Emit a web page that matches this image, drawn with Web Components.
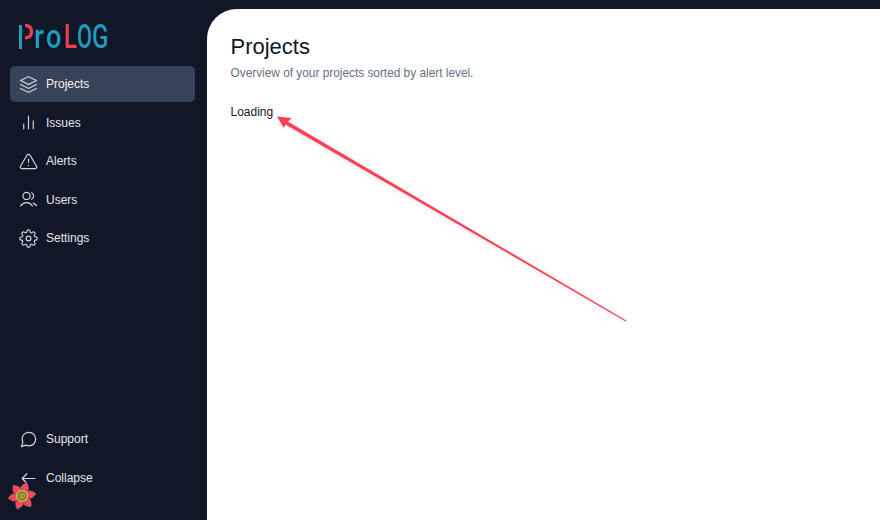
<!DOCTYPE html>
<html lang="en">
<head>
<meta charset="utf-8">
<title>ProLOG</title>
<style>
  html, body { margin: 0; height: 100%; }
  body { background: #101828; font-family: "Liberation Sans", Arial, sans-serif; overflow: hidden; }
</style>
</head>
<body>
<app-shell>
  <side-nav slot="nav">
    <pro-logo slot="logo"></pro-logo>
    <nav-item icon="layers" active>Projects</nav-item>
    <nav-item icon="bars">Issues</nav-item>
    <nav-item icon="alert">Alerts</nav-item>
    <nav-item icon="users">Users</nav-item>
    <nav-item icon="settings">Settings</nav-item>
    <nav-item slot="bottom" icon="support">Support</nav-item>
    <nav-item slot="bottom" icon="back">Collapse</nav-item>
  </side-nav>
  <page-header title="Projects" subtitle="Overview of your projects sorted by alert level."></page-header>
  <div style="font-size:12px;line-height:18px;color:#101828">Loading</div>
</app-shell>
<flower-badge></flower-badge>
<red-arrow></red-arrow>

<script>
const ICONS = {
  layers: `<path d="M2 12l9.64 4.82c.13.07.2.1.27.11a.6.6 0 0 0 .18 0c.07-.01.14-.04.27-.11L22 12M2 17l9.64 4.82c.13.07.2.1.27.11a.6.6 0 0 0 .18 0c.07-.01.14-.04.27-.11L22 17M2 7l9.64-4.82c.13-.07.2-.1.27-.11a.6.6 0 0 1 .18 0c.07.01.14.04.27.11L22 7l-9.64 4.82c-.13.07-.2.1-.27.11a.6.6 0 0 1-.18 0c-.07-.01-.14-.04-.27-.11L2 7Z"/>`,
  bars: `<path d="M18 20V10M12 20V4M6 20v-6"/>`,
  alert: `<path d="M10.29 3.86L1.82 18a2 2 0 0 0 1.71 3h16.94a2 2 0 0 0 1.71-3L13.71 3.86a2 2 0 0 0-3.42 0z"/><path d="M12 9v4M12 17h.01"/>`,
  users: `<path d="M16 3.47a4.5 4.5 0 0 1 0 8.06M18 16.62c1.51.68 2.87 1.8 4 3.24M2 20c1.95-2.48 4.59-4 7.5-4s5.55 1.52 7.5 4M14 7.5a4.5 4.5 0 1 1-9 0 4.5 4.5 0 0 1 9 0Z"/>`,
  settings: `<circle cx="12" cy="12" r="3"/><path d="M19.4 15a1.65 1.65 0 0 0 .33 1.82l.06.06a2 2 0 0 1 0 2.83 2 2 0 0 1-2.83 0l-.06-.06a1.65 1.65 0 0 0-1.82-.33 1.65 1.65 0 0 0-1 1.51V21a2 2 0 0 1-2 2 2 2 0 0 1-2-2v-.09A1.65 1.65 0 0 0 9 19.4a1.65 1.65 0 0 0-1.82.33l-.06.06a2 2 0 0 1-2.83 0 2 2 0 0 1 0-2.83l.06-.06a1.65 1.65 0 0 0 .33-1.82 1.65 1.65 0 0 0-1.51-1H3a2 2 0 0 1-2-2 2 2 0 0 1 2-2h.09A1.65 1.65 0 0 0 4.6 9a1.65 1.65 0 0 0-.33-1.82l-.06-.06a2 2 0 0 1 0-2.83 2 2 0 0 1 2.83 0l.06.06a1.65 1.65 0 0 0 1.82.33H9a1.65 1.65 0 0 0 1-1.51V3a2 2 0 0 1 2-2 2 2 0 0 1 2 2v.09a1.65 1.65 0 0 0 1 1.51 1.65 1.65 0 0 0 1.82-.33l.06-.06a2 2 0 0 1 2.83 0 2 2 0 0 1 0 2.83l-.06.06a1.65 1.65 0 0 0-.33 1.82V9a1.65 1.65 0 0 0 1.51 1H21a2 2 0 0 1 2 2 2 2 0 0 1-2 2h-.09a1.65 1.65 0 0 0-1.51 1z"/>`,
  support: `<path d="M21 11.5a8.38 8.38 0 0 1-.9 3.8 8.5 8.5 0 0 1-7.6 4.7 8.38 8.38 0 0 1-3.8-.9L3 21l1.9-5.7a8.38 8.38 0 0 1-.9-3.8 8.5 8.5 0 0 1 4.7-7.6 8.38 8.38 0 0 1 3.8-.9h.5a8.48 8.48 0 0 1 8 8v.5z"/>`,
  back: `<path d="M20 12H4M10 6l-6 6 6 6"/>`
};

class AppShell extends HTMLElement {
  constructor() {
    super();
    this.attachShadow({ mode: "open" }).innerHTML = `
      <style>
        :host { display: flex; height: 520px; }
        main {
          flex: 1;
          margin-top: 9px;
          padding: 24px 24px 0 23.5px;
          background: #fff;
          border-radius: 30px 0 0 0;
        }
      </style>
      <slot name="nav"></slot>
      <main><slot></slot></main>`;
  }
}

class SideNav extends HTMLElement {
  constructor() {
    super();
    this.attachShadow({ mode: "open" }).innerHTML = `
      <style>
        :host {
          display: flex;
          flex-direction: column;
          box-sizing: border-box;
          width: 207px;
          height: 520px;
          padding: 22px 12px 24px 10px;
        }
        .top { display: flex; flex-direction: column; gap: 2.6px; margin-top: 14px; }
        .bottom { display: flex; flex-direction: column; gap: 2.6px; margin-top: auto; }
      </style>
      <slot name="logo"></slot>
      <div class="top"><slot></slot></div>
      <div class="bottom"><slot name="bottom"></slot></div>`;
  }
}

class NavItem extends HTMLElement {
  constructor() {
    super();
    const icon = ICONS[this.getAttribute("icon")] || "";
    this.attachShadow({ mode: "open" }).innerHTML = `
      <style>
        :host {
          display: flex;
          align-items: center;
          gap: 8px;
          height: 36px;
          padding-left: 9px;
          border-radius: 5px;
          color: #e4e7ec;
          font-size: 12px;
        }
        :host([active]) { background: #374357; color: #f2f4f7; }
        svg { width: 19px; height: 19px; fill: none; stroke: #d0d5dd; stroke-width: 1.5; stroke-linecap: round; stroke-linejoin: round; }
      </style>
      <svg viewBox="0 0 24 24">${icon}</svg>
      <slot></slot>`;
  }
}

// wordmark kept as real text, every letter squeezed to its slot in the logo
class ProLogo extends HTMLElement {
  constructor() {
    super();
    const letters = [
      ["P", 17, 0.81, "#ef3f51"],
      ["r", 11.5, 0.85, "#1f9cc0"],
      ["o", 15.5, 0.82, "#1f9cc0"],
      ["L", 2.5, 0, ""],
      ["L", 13, 0.73, "#ef3f51"],
      ["O", 15, 0.66, "#1f9cc0"],
      ["G", 16.5, 0.73, "#1f9cc0"]
    ];
    const marks = letters.map(([c, w, scale, color]) => scale
      ? `<span style="width:${w}px"><b style="color:${color};transform:scaleX(${scale})">${c}</b></span>`
      : `<span style="width:${w}px"></span>`).join("");
    this.attachShadow({ mode: "open" }).innerHTML = `
      <style>
        :host { display: flex; position: relative; height: 30px; padding-left: 7px; font: 500 33px/30px Roboto, sans-serif; }
        span { display: block; flex: none; }
        b { display: block; font-weight: 500; width: max-content; transform-origin: 0 0; }
        .mask { position: absolute; left: 8px; top: 0; width: 7px; height: 30px; background: #101828; }
        .stem { position: absolute; left: 9px; top: 3px; width: 2.8px; height: 24px; background: #1f9cc0; }
      </style>
      ${marks}
      <div class="mask"></div>
      <div class="stem"></div>`;
  }
}

class PageHeader extends HTMLElement {
  constructor() {
    super();
    this.attachShadow({ mode: "open" }).innerHTML = `
      <style>
        :host { display: block; margin-bottom: 21px; }
        h1 { margin: 0 0 3px; font-size: 22px; line-height: 28px; font-weight: 400; color: #101828; }
        p { margin: 0; font-size: 11.85px; line-height: 18px; color: #667085; }
      </style>
      <h1>${this.getAttribute("title")}</h1>
      <p>${this.getAttribute("subtitle")}</p>`;
  }
}

class FlowerBadge extends HTMLElement {
  constructor() {
    super();
    let petals = "";
    for (let i = 0; i < 6; i++) {
      petals += `<path transform="rotate(${i * 60 + 20} 15 15)" d="M15 15C9 11 9.500 5 15 .5 20.500 5 21 11 15 15Z"/>`;
    }
    this.attachShadow({ mode: "open" }).innerHTML = `
      <style>
        :host { display: block; position: absolute; left: 7px; top: 481px; width: 30px; height: 30px; }
        svg { display: block; width: 30px; height: 30px; }
      </style>
      <svg viewBox="0 0 30 30">
        <g fill="#f24a5c" stroke="#0f3050" stroke-width=".5">${petals}</g>
        <circle cx="15" cy="15" r="6.200" fill="#c9a93a"/>
        <circle cx="15" cy="15" r="3.800" fill="none" stroke="#4b5a45" stroke-width="1"/>
        <circle cx="15" cy="15" r="1.500" fill="#e3c74a" stroke="#3c4a44" stroke-width=".7"/>
      </svg>`;
  }
}

class RedArrow extends HTMLElement {
  constructor() {
    super();
    this.attachShadow({ mode: "open" }).innerHTML = `
      <style>
        :host { display: block; position: absolute; left: 0; top: 0; width: 880px; height: 520px; pointer-events: none; }
        svg { display: block; width: 880px; height: 520px; filter: drop-shadow(0 1px 2px rgba(0,0,0,.12)); }
      </style>
      <svg viewBox="0 0 880 520">
        <polygon fill="#fa4054" points="277,116.500 291.500,118 288,121.700 626.300,320.500 625.700,321.500 285.800,124.800 283.500,127.500"/>
      </svg>`;
  }
}

customElements.define("app-shell", AppShell);
customElements.define("side-nav", SideNav);
customElements.define("nav-item", NavItem);
customElements.define("pro-logo", ProLogo);
customElements.define("page-header", PageHeader);
customElements.define("flower-badge", FlowerBadge);
customElements.define("red-arrow", RedArrow);
</script>
</body>
</html>
